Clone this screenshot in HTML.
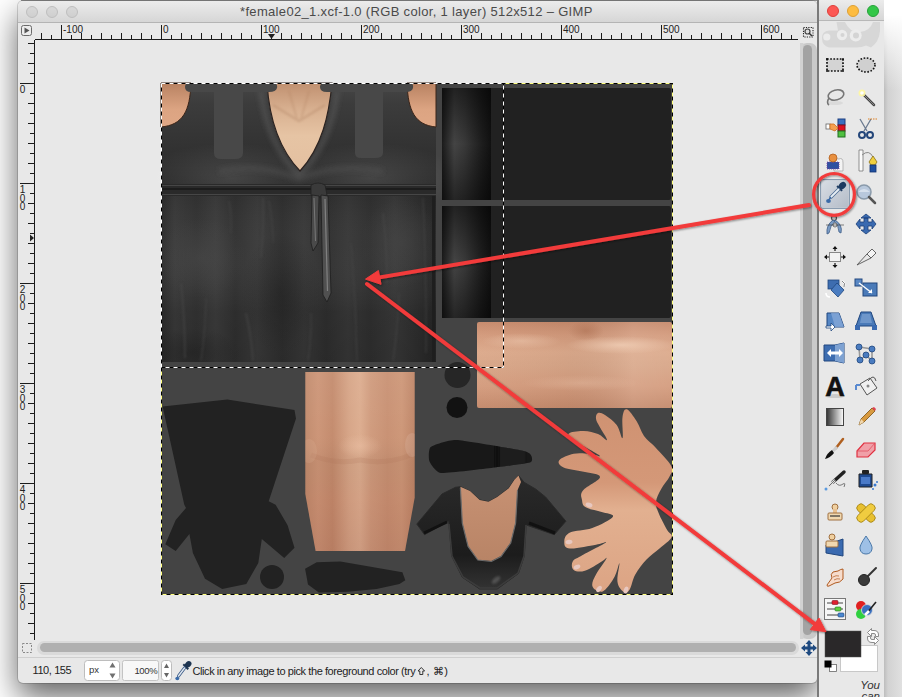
<!DOCTYPE html><html><head><meta charset="utf-8"><style>
*{margin:0;padding:0;box-sizing:border-box}
html,body{width:902px;height:697px;overflow:hidden;background:#fff;font-family:"Liberation Sans",sans-serif}
svg{position:absolute;left:0;top:0;overflow:visible}
#topline{position:absolute;left:21px;top:0;width:800px;height:1px;background:#9a9a9a}
#win{position:absolute;left:18px;top:1px;width:799px;height:682px;border-radius:5px;background:#e8e8e8;
 box-shadow:0 0 0 1px rgba(0,0,0,0.15),0 14px 32px rgba(0,0,0,0.62);overflow:hidden}
#title{position:absolute;left:0;top:0;width:800px;height:22px;background:linear-gradient(#ececec,#d6d6d6);border-bottom:1px solid #b4b4b4}
.tl{position:absolute;top:5px;width:12px;height:12px;border-radius:50%}
#ttext{position:absolute;left:222px;top:3px;font-size:13px;letter-spacing:0.33px;color:#4a4a4a;white-space:nowrap}
#tool{position:absolute;left:817px;top:0;width:67px;height:697px;background:#e8e8e8;border-left:2px solid #7a7a7a;
 }
#rsh{position:absolute;left:884px;top:0;width:18px;height:697px;background:linear-gradient(to right,#bdbdbd,#d2d2d2 4px,#e0e0e0)}
#rsh2{position:absolute;left:883px;top:0;width:19px;height:90px;background:linear-gradient(#fff 15px,rgba(255,255,255,0))}
#ttitle{position:absolute;left:0;top:0;width:65px;height:21px;background:linear-gradient(#ececec,#d6d6d6);border-bottom:1px solid #b8b8b8}
#status{position:absolute;left:15px;top:673px;font-size:11px;letter-spacing:-0.4px;color:#222;white-space:nowrap;line-height:12px}
</style></head><body><div id="topline"></div>
<div id="win">
<div id="title">
<div class="tl" style="left:8px;background:linear-gradient(#d8d8d8,#cfcfcf);border:1px solid #bdbdbd"></div>
<div class="tl" style="left:28px;background:linear-gradient(#d8d8d8,#cfcfcf);border:1px solid #bdbdbd"></div>
<div class="tl" style="left:48px;background:linear-gradient(#d8d8d8,#cfcfcf);border:1px solid #bdbdbd"></div>
<div id="ttext">*female02_1.xcf-1.0 (RGB color, 1 layer) 512x512 – GIMP</div>
</div>
</div>
<svg width="902" height="697" viewBox="0 0 902 697" style="font-family:Liberation Sans">
<g transform="translate(161 83)"><defs>
<linearGradient id="skirtH" x1="0" x2="1" y1="0" y2="0">
 <stop offset="0" stop-color="#2c2c2c"/><stop offset="0.05" stop-color="#3a3a3a"/><stop offset="0.13" stop-color="#333"/>
 <stop offset="0.2" stop-color="#3c3c3c"/><stop offset="0.27" stop-color="#313131"/><stop offset="0.35" stop-color="#3b3b3b"/>
 <stop offset="0.44" stop-color="#303030"/><stop offset="0.52" stop-color="#393939"/><stop offset="0.6" stop-color="#2f2f2f"/>
 <stop offset="0.68" stop-color="#383838"/><stop offset="0.76" stop-color="#303030"/><stop offset="0.85" stop-color="#393939"/>
 <stop offset="0.93" stop-color="#2f2f2f"/><stop offset="1" stop-color="#262626"/>
</linearGradient>
<linearGradient id="skirtV" x1="0" x2="0" y1="0" y2="1">
 <stop offset="0" stop-color="#000" stop-opacity="0.05"/><stop offset="0.3" stop-color="#fff" stop-opacity="0.02"/>
 <stop offset="0.7" stop-color="#000" stop-opacity="0.08"/><stop offset="1" stop-color="#000" stop-opacity="0.12"/>
</linearGradient>
<linearGradient id="bodice" x1="0" x2="0" y1="0" y2="1">
 <stop offset="0" stop-color="#464646"/><stop offset="0.2" stop-color="#3c3c3c"/><stop offset="0.6" stop-color="#333"/><stop offset="1" stop-color="#2a2a2a"/>
</linearGradient>
<radialGradient id="bodHi" cx="0.5" cy="0.5" r="0.5">
 <stop offset="0" stop-color="#fff" stop-opacity="0.12"/><stop offset="1" stop-color="#fff" stop-opacity="0"/>
</radialGradient>
<linearGradient id="neck" x1="0" x2="0" y1="0" y2="1">
 <stop offset="0" stop-color="#c09070"/><stop offset="0.3" stop-color="#d8b090"/><stop offset="0.6" stop-color="#e6c4a4"/><stop offset="1" stop-color="#e4c0a0"/>
</linearGradient>
<linearGradient id="shoulder" x1="0" x2="0" y1="0" y2="1">
 <stop offset="0" stop-color="#b88262"/><stop offset="0.6" stop-color="#dca482"/><stop offset="1" stop-color="#e0a886"/>
</linearGradient>
<filter id="blur2" x="-20%" y="-20%" width="140%" height="140%"><feGaussianBlur stdDeviation="2.5"/></filter>
<filter id="blur1" x="-20%" y="-20%" width="140%" height="140%"><feGaussianBlur stdDeviation="1"/></filter>
<linearGradient id="armV" x1="0" x2="0" y1="0" y2="1">
 <stop offset="0" stop-color="#c68a6c"/><stop offset="0.15" stop-color="#d39a7c"/><stop offset="0.35" stop-color="#dcaa8c"/><stop offset="0.5" stop-color="#d8a688"/>
 <stop offset="0.75" stop-color="#d49c7e"/><stop offset="1" stop-color="#c48a6c"/>
</linearGradient>
<linearGradient id="armH" x1="0" x2="1" y1="0" y2="0">
 <stop offset="0" stop-color="#fff" stop-opacity="0.02"/><stop offset="0.45" stop-color="#000" stop-opacity="0.03"/>
 <stop offset="0.8" stop-color="#fff" stop-opacity="0.1"/><stop offset="1" stop-color="#fff" stop-opacity="0.05"/>
</linearGradient>
<radialGradient id="hiw" cx="0.5" cy="0.5" r="0.5"><stop offset="0" stop-color="#f4d4bc" stop-opacity="0.7"/><stop offset="1" stop-color="#f4d4bc" stop-opacity="0"/></radialGradient>
<radialGradient id="dkp" cx="0.5" cy="0.5" r="0.5"><stop offset="0" stop-color="#a86a4c" stop-opacity="0.5"/><stop offset="1" stop-color="#a86a4c" stop-opacity="0"/></radialGradient>
<linearGradient id="legH" x1="0" x2="1" y1="0" y2="0">
 <stop offset="0" stop-color="#c08a6c"/><stop offset="0.12" stop-color="#cc9476"/><stop offset="0.25" stop-color="#c38a6c"/>
 <stop offset="0.4" stop-color="#d6a486"/><stop offset="0.5" stop-color="#dcac8e"/><stop offset="0.6" stop-color="#cf9a7c"/>
 <stop offset="0.75" stop-color="#c89072"/><stop offset="0.88" stop-color="#cd9677"/><stop offset="1" stop-color="#bd8466"/>
</linearGradient>
<linearGradient id="legV" x1="0" x2="0" y1="0" y2="1">
 <stop offset="0" stop-color="#fff" stop-opacity="0.06"/><stop offset="0.35" stop-color="#fff" stop-opacity="0.02"/>
 <stop offset="0.5" stop-color="#000" stop-opacity="0.04"/><stop offset="0.7" stop-color="#500" stop-opacity="0.06"/><stop offset="1" stop-color="#400" stop-opacity="0.1"/>
</linearGradient>
<radialGradient id="knee" cx="0.5" cy="0.5" r="0.5">
 <stop offset="0" stop-color="#ecc0a4" stop-opacity="0.55"/><stop offset="1" stop-color="#ecc0a4" stop-opacity="0"/>
</radialGradient>
<linearGradient id="pfab" x1="0" x2="1" y1="0" y2="0">
 <stop offset="0" stop-color="#1a1a1a"/><stop offset="0.25" stop-color="#444"/><stop offset="0.45" stop-color="#3a3a3a"/>
 <stop offset="0.8" stop-color="#1e1e1e"/><stop offset="1" stop-color="#111"/>
</linearGradient>
<linearGradient id="pfabV" x1="0" x2="0" y1="0" y2="1">
 <stop offset="0" stop-color="#000" stop-opacity="0.5"/><stop offset="0.5" stop-color="#000" stop-opacity="0"/><stop offset="1" stop-color="#000" stop-opacity="0.45"/>
</linearGradient>
<linearGradient id="hand" x1="0" x2="1" y1="0" y2="0">
 <stop offset="0" stop-color="#d09474"/><stop offset="1" stop-color="#e0aa88"/>
</linearGradient>
<linearGradient id="hand2" x1="0" x2="1" y1="0" y2="0">
 <stop offset="0" stop-color="#d99e7e"/><stop offset="1" stop-color="#e8b898"/>
</linearGradient>
<linearGradient id="leather" x1="0" x2="0" y1="0" y2="1">
 <stop offset="0" stop-color="#2a2a2a"/><stop offset="0.7" stop-color="#1c1c1c"/><stop offset="1" stop-color="#333"/>
</linearGradient>
<linearGradient id="chest" x1="0" x2="0" y1="0" y2="1">
 <stop offset="0" stop-color="#c89274"/><stop offset="1" stop-color="#b88466"/>
</linearGradient>
<linearGradient id="handV" x1="0" x2="0" y1="0" y2="1">
 <stop offset="0" stop-color="#cf9272"/><stop offset="0.4" stop-color="#d49878"/><stop offset="0.55" stop-color="#e2b090"/><stop offset="1" stop-color="#dca484"/>
</linearGradient>
<radialGradient id="rgLight" cx="0.5" cy="0.5" r="0.5"><stop offset="0" stop-color="#4a4a4a" stop-opacity="0.55"/><stop offset="1" stop-color="#4a4a4a" stop-opacity="0"/></radialGradient>
<radialGradient id="rgDark" cx="0.5" cy="0.5" r="0.5"><stop offset="0" stop-color="#1c1c1c" stop-opacity="0.45"/><stop offset="1" stop-color="#1c1c1c" stop-opacity="0"/></radialGradient>
</defs>
<rect x="0" y="0" width="512" height="512" fill="#444"/>
<rect x="0" y="0" width="275" height="279" fill="#2e2e2e"/>
<rect x="0" y="0" width="275" height="101" fill="url(#bodice)"/>
<ellipse cx="70" cy="95" rx="90" ry="35" fill="url(#bodHi)"/>
<ellipse cx="210" cy="95" rx="90" ry="35" fill="url(#bodHi)"/>
<rect x="0" y="113" width="275" height="166" fill="url(#skirtH)"/>
<rect x="0" y="113" width="275" height="166" fill="url(#skirtV)"/>
<clipPath id="skclip"><rect x="0" y="113" width="275" height="166"/></clipPath>
<g clip-path="url(#skclip)">
<ellipse cx="40" cy="175" rx="45" ry="40" fill="url(#rgLight)"/><ellipse cx="240" cy="160" rx="40" ry="45" fill="url(#rgLight)" opacity="0.8"/><ellipse cx="120" cy="210" rx="40" ry="60" fill="url(#rgDark)"/><ellipse cx="30" cy="270" rx="50" ry="25" fill="url(#rgDark)"/>
<g filter="url(#blur1)" stroke="#484848" fill="none" opacity="0.5">
<path d="M102 115Q103.0 145.0 100 175" stroke-width="2"/>
<path d="M108 118Q112.0 139.0 112 160" stroke-width="1.5"/>
<path d="M20 200Q24.0 237.5 24 275" stroke-width="2"/>
<path d="M45 215Q44.5 246.5 40 278" stroke-width="1.5"/>
<path d="M85 230Q90.5 254.0 92 278" stroke-width="2"/>
<path d="M190 160Q195.0 219.0 196 278" stroke-width="1.5"/>
<path d="M222 130Q226.0 165.0 226 200" stroke-width="2"/>
<path d="M238 210Q237.0 244.0 232 278" stroke-width="1.5"/>
<path d="M262 115Q265.5 192.5 265 270" stroke-width="1.5"/>
<path d="M68 118Q71.0 134.0 70 150" stroke-width="1.5"/>
<path d="M150 230Q150.5 254.0 147 278" stroke-width="1.5"/>
</g></g>
<rect x="0" y="101" width="275" height="12" fill="#2a2a2a"/>
<path d="M0 102.5H275M0 111.5H275" stroke="#464646" stroke-width="1"/>
<path d="M0 106H275" stroke="#1c1c1c" stroke-width="2"/>
<rect x="271" y="113" width="3" height="166" fill="#1e1e1e"/>
<g filter="url(#blur2)" fill="none" stroke-linecap="round">
<path d="M100 10C104 40 115 70 138 92C161 70 172 40 176 10" stroke="#5a5a5a" stroke-width="5" opacity="0.6"/>
<path d="M60 88Q100 80 138 96Q176 80 220 88" stroke="#505050" stroke-width="5" opacity="0.6"/>
<path d="M8 20H20M255 20H268" stroke="#4a4a4a" stroke-width="8" opacity="0.5"/>
</g>
<path d="M0 0H30C29 28 22 42 0 44Z" fill="url(#shoulder)" stroke="#3a2418" stroke-width="1"/>
<path d="M275 0H246C247 28 254 42 275 44Z" fill="url(#shoulder)" stroke="#3a2418" stroke-width="1"/>
<path d="M106 0C108 32 116 64 139 88C161 64 168 32 171 0Z" fill="url(#neck)" stroke="#2a2220" stroke-width="1.2"/>
<g filter="url(#blur1)" opacity="0.3"><path d="M112 22Q125 30 138 38Q151 30 164 22" stroke="#a87a5c" stroke-width="2.5" fill="none"/><path d="M128 8L136 36M148 8L140 36" stroke="#b08262" stroke-width="2" fill="none"/></g>
<path d="M28 0H112Q117 0 116 5Q115 9 108 9H82V70Q82 76 74 76H60Q53 76 53 70V9H30Q24 9 24 4Q24 0 28 0Z" fill="#484848"/>
<path d="M163 0H248Q253 0 252 5Q251 9 245 9H222V70Q222 75 214 75H200Q194 75 194 70V9H166Q159 9 159 4Q159 0 163 0Z" fill="#484848"/>
<path d="M150 102Q157 98 164 102L166 112Q158 116 150 112Z" fill="#3a3a3a" stroke="#222" stroke-width="0.8"/>
<path d="M151 112L158 113L157 160L152 168L150 160Z" fill="#4a4a4a" stroke="#1e1e1e" stroke-width="0.8"/><path d="M153 115L154.5 158" stroke="#777" stroke-width="1"/>
<path d="M160 112L167 113L170 210L166 219L162 212Z" fill="#505050" stroke="#1e1e1e" stroke-width="0.8"/><path d="M164 116L166.5 208" stroke="#808080" stroke-width="1.2"/>
<rect x="281" y="5" width="229" height="112" rx="2" fill="#212121"/>
<rect x="281" y="5" width="49" height="112" fill="url(#pfab)"/>
<rect x="281" y="5" width="49" height="112" fill="url(#pfabV)"/>
<rect x="281" y="123" width="229" height="112" rx="2" fill="#212121"/>
<rect x="281" y="123" width="49" height="112" fill="url(#pfab)"/>
<rect x="281" y="123" width="49" height="112" fill="url(#pfabV)"/>
<rect x="316" y="239" width="195" height="86" rx="2" fill="url(#armV)"/>
<rect x="316" y="239" width="195" height="86" rx="2" fill="url(#armH)"/><clipPath id="armclip"><rect x="316" y="239" width="195" height="86" rx="2"/></clipPath><g clip-path="url(#armclip)"><ellipse cx="460" cy="262" rx="55" ry="9" fill="url(#hiw)"/><ellipse cx="360" cy="258" rx="40" ry="8" fill="url(#hiw)" opacity="0.6"/><ellipse cx="425" cy="248" rx="18" ry="10" fill="url(#dkp)"/><ellipse cx="420" cy="300" rx="60" ry="8" fill="url(#hiw)" opacity="0.35"/></g>
<circle cx="296.5" cy="292" r="13" fill="#262626"/>
<circle cx="296" cy="324.5" r="10.5" fill="#121212"/>
<clipPath id="legclip"><path d="M144.3 289H253.7V414.5L244 468H154.6L144.3 411Z"/></clipPath>
<g clip-path="url(#legclip)">
<rect x="144" y="289" width="110" height="180" fill="url(#legH)"/>
<rect x="144" y="289" width="110" height="180" fill="url(#legV)"/>
<ellipse cx="199" cy="363" rx="22" ry="12" fill="url(#knee)"/><path d="M150 372Q175 382 199 377Q225 382 250 372" stroke="#a86c50" stroke-width="5" fill="none" opacity="0.15"/><ellipse cx="148" cy="368" rx="8" ry="12" fill="#e8c0a8" opacity="0.15"/><ellipse cx="251" cy="362" rx="7" ry="12" fill="#e8c8b8" opacity="0.2"/>
</g>
<polygon points="1.6,323.5 66.3,316.6 133.5,327.0 135.0,335.6 107.7,418.2 114.6,421.7 126.6,442.3 133.5,464.7 123.2,475.0 100.8,456.0 97.3,480.0 85.3,501.0 61.2,506.0 44.0,495.7 31.9,470.0 28.4,451.0 14.7,468.0 4.3,461.3 14.7,437.0 25.0,425.0 23.3,421.7" fill="#222"/>
<circle cx="111" cy="494" r="12" fill="#222"/>
<polygon points="144.1,485.7 155.7,479.2 179.4,478.5 216.9,485.0 241.4,489.3 244.3,497.3 238.5,500.9 215.5,505.9 186.6,508.8 157.8,509.5 147.0,501.6" fill="#222"/>
<path d="M269.7 364.0C272.0 362.2 287.8 356.7 295.5 357.0C303.2 357.3 356.5 366.7 362.7 368.0C368.9 369.3 369.9 372.0 370.4 373.0C370.9 374.0 372.2 378.6 369.0 379.6C365.8 380.6 339.1 383.9 331.7 384.8C324.3 385.7 285.3 390.5 280.0 390.0C274.7 389.5 269.3 380.5 268.4 378.3C267.5 376.1 267.4 365.8 269.7 364.0Z" fill="#181818"/>
<clipPath id="sh3clip"><path d="M269.7 364.0C272.0 362.2 287.8 356.7 295.5 357.0C303.2 357.3 356.5 366.7 362.7 368.0C368.9 369.3 369.9 372.0 370.4 373.0C370.9 374.0 372.2 378.6 369.0 379.6C365.8 380.6 339.1 383.9 331.7 384.8C324.3 385.7 285.3 390.5 280.0 390.0C274.7 389.5 269.3 380.5 268.4 378.3C267.5 376.1 267.4 365.8 269.7 364.0Z"/></clipPath>
<g clip-path="url(#sh3clip)"><rect x="334" y="357" width="4" height="40" fill="#0c0c0c" filter="url(#blur1)"/><rect x="339" y="357" width="25" height="40" fill="#202020" opacity="0.6" filter="url(#blur1)"/></g>
<polygon points="281.0,411.0 294.5,404.3 299.4,403.7 309.0,408.1 318.7,416.9 327.5,418.8 336.2,414.0 347.8,405.2 353.6,396.5 357.5,392.6 363.3,399.4 374.9,406.2 384.6,414.0 404.9,438.2 393.3,451.7 365.2,442.0 363.3,473.0 357.5,490.5 336.2,506.0 318.7,506.0 301.3,494.3 290.6,473.0 287.7,438.2 263.5,451.7 255.8,441.1" fill="url(#leather)" stroke="#2a2a2a" stroke-width="1" stroke-linejoin="round"/>
<polygon points="299.4,403.7 309.0,408.1 318.7,416.9 327.5,418.8 336.2,414.0 347.8,405.2 353.6,396.5 357.5,392.6 360.0,399.0 356.5,407.2 354.6,440.1 349.7,459.5 340.0,473.0 330.4,477.9 316.8,476.9 307.1,463.4 301.3,440.1" fill="url(#chest)"/>
<polyline points="299.4,405.0 301.3,440.1 307.1,463.4 316.8,477.0 330.4,478.5 340.0,473.5 349.7,460.0 354.6,440.1 356.5,407.2" stroke="#6a6a6a" stroke-width="1.2" fill="none"/>
<polyline points="288.0,441.0 291.0,473.0 302.0,494.0 319.0,505.0 336.0,505.0 357.0,490.0 363.0,473.0 365.0,442.0" stroke="#3c3c3c" stroke-width="1.5" fill="none"/>
<ellipse cx="335" cy="497" rx="5" ry="2.5" fill="#6a6a6a" opacity="0.6" filter="url(#blur1)" transform="rotate(-40 335 497)"/>
<polyline points="263.0,450.0 286.0,439.0" stroke="#111" stroke-width="3" fill="none"/>
<polyline points="394.0,450.0 368.0,440.0" stroke="#111" stroke-width="3" fill="none"/>
<path d="M465.8 326.3C468.4 327.1 472.6 333.6 475.8 338.5C479.0 343.4 479.6 348.2 483.0 352.9C486.4 357.6 489.5 358.9 494.5 364.4C499.5 369.9 507.7 377.8 510.3 383.0C512.9 388.2 510.7 388.8 508.8 393.0C506.9 397.2 502.7 401.3 500.2 406.0C497.7 410.7 495.5 414.3 495.0 418.7C494.5 423.1 495.6 424.9 497.6 430.0C499.6 435.1 503.6 442.3 506.0 446.7C508.4 451.1 512.0 450.8 510.6 454.2C509.2 457.6 503.1 461.3 498.5 465.4C493.9 469.5 489.9 471.8 485.5 476.6C481.1 481.4 477.4 486.0 474.3 491.5C471.2 497.0 470.8 503.2 468.7 506.4C466.6 509.6 465.2 510.6 463.0 509.2C460.8 507.8 457.3 504.3 456.5 499.0C455.7 493.7 458.9 481.3 458.4 480.3C457.9 479.3 456.3 488.6 453.7 493.4C451.1 498.2 447.3 503.7 444.4 506.4C441.5 509.1 440.3 509.0 437.9 508.3C435.5 507.6 431.8 505.8 431.3 502.7C430.8 499.6 432.4 496.4 435.0 491.5C437.6 486.6 444.3 478.1 445.3 475.7C446.3 473.3 444.6 476.3 440.7 478.5C436.8 480.7 429.0 486.3 423.9 487.8C418.8 489.3 414.9 488.6 412.7 486.9C410.5 485.2 410.3 481.1 411.7 478.5C413.1 475.9 414.1 476.3 420.1 472.9C426.1 469.5 441.7 461.9 444.4 459.8C447.1 457.7 441.5 460.7 435.0 461.7C428.5 462.7 414.8 465.9 409.0 465.4C403.2 464.9 403.3 461.8 403.3 458.9C403.3 456.0 403.9 452.1 409.0 449.5C414.1 446.9 423.4 447.8 431.3 444.9C439.2 442.0 450.2 436.6 451.9 433.7C453.6 430.8 445.7 430.7 440.7 429.0C435.7 427.3 428.4 426.5 424.8 424.3C421.2 422.1 421.5 420.0 421.0 416.9C420.5 413.8 418.7 411.7 422.0 407.5C425.3 403.3 438.9 397.4 439.0 394.0C439.1 390.6 429.4 390.5 422.7 388.8C416.0 387.1 407.1 386.6 402.6 384.5C398.1 382.4 396.4 379.8 398.3 377.3C400.2 374.8 407.1 372.0 412.7 370.8C418.3 369.6 424.2 370.6 429.0 371.0C433.8 371.4 439.4 374.0 439.0 373.0C438.6 372.0 431.6 368.4 427.0 365.8C422.4 363.2 417.6 361.4 414.0 358.6C410.4 355.8 406.0 352.7 407.6 350.7C409.2 348.7 417.3 347.8 422.7 347.9C428.1 348.0 432.7 349.3 437.0 351.0C441.3 352.7 445.7 358.4 446.0 357.0C446.3 355.6 440.5 347.5 438.5 343.6C436.5 339.7 435.3 338.2 435.0 335.7C434.7 333.2 435.4 330.7 437.0 330.0C438.6 329.3 440.6 329.8 444.0 332.0C447.4 334.2 452.5 337.8 455.7 342.0C458.9 346.2 460.4 356.4 461.5 355.0C462.6 353.6 460.7 339.5 461.5 334.2C462.3 328.9 463.2 325.5 465.8 326.3Z" fill="url(#handV)"/>
<ellipse cx="428" cy="422" rx="3.5" ry="2.2" fill="#e8c8c0" transform="rotate(15 428 422)"/>
<ellipse cx="408" cy="459" rx="3.5" ry="2.2" fill="#e8c8c0" transform="rotate(-10 408 459)"/>
<ellipse cx="416" cy="484" rx="3.5" ry="2.2" fill="#e8c8c0" transform="rotate(-25 416 484)"/>
<ellipse cx="438" cy="506" rx="3.5" ry="2.2" fill="#e8c8c0" transform="rotate(-50 438 506)"/>
<ellipse cx="465" cy="507" rx="3.5" ry="2.2" fill="#e8c8c0" transform="rotate(-70 465 507)"/></g>
<rect x="161.5" y="83.5" width="511" height="511" fill="none" stroke="#000" stroke-width="1"/>
<rect x="161.5" y="83.5" width="511" height="511" fill="none" stroke="#ffff80" stroke-width="1" stroke-dasharray="4 4"/>
<rect x="161.5" y="83.5" width="342" height="284" fill="none" stroke="#000" stroke-width="1"/>
<rect x="161.5" y="83.5" width="342" height="284" fill="none" stroke="#fff" stroke-width="1" stroke-dasharray="4 4"/>
<path d="M41.5 33V39 M51.5 35V39 M61.5 25V39 M71.5 35V39 M81.5 33V39 M91.5 35V39 M101.5 33V39 M111.5 35V39 M121.5 33V39 M131.5 35V39 M141.5 33V39 M151.5 35V39 M161.5 25V39 M171.5 35V39 M181.5 33V39 M191.5 35V39 M201.5 33V39 M211.5 35V39 M221.5 33V39 M231.5 35V39 M241.5 33V39 M251.5 35V39 M261.5 25V39 M271.5 35V39 M281.5 33V39 M291.5 35V39 M301.5 33V39 M311.5 35V39 M321.5 33V39 M331.5 35V39 M341.5 33V39 M351.5 35V39 M361.5 25V39 M371.5 35V39 M381.5 33V39 M391.5 35V39 M401.5 33V39 M411.5 35V39 M421.5 33V39 M431.5 35V39 M441.5 33V39 M451.5 35V39 M461.5 25V39 M471.5 35V39 M481.5 33V39 M491.5 35V39 M501.5 33V39 M511.5 35V39 M521.5 33V39 M531.5 35V39 M541.5 33V39 M551.5 35V39 M561.5 25V39 M571.5 35V39 M581.5 33V39 M591.5 35V39 M601.5 33V39 M611.5 35V39 M621.5 33V39 M631.5 35V39 M641.5 33V39 M651.5 35V39 M661.5 25V39 M671.5 35V39 M681.5 33V39 M691.5 35V39 M701.5 33V39 M711.5 35V39 M721.5 33V39 M731.5 35V39 M741.5 33V39 M751.5 35V39 M761.5 25V39 M771.5 35V39 M781.5 33V39 M791.5 35V39" stroke="#1a1a1a" stroke-width="1"/>
<path d="M35 39.5H798" stroke="#1a1a1a" stroke-width="1"/>
<text x="63" y="32.5" font-size="10" fill="#222">-100</text>
<text x="163" y="32.5" font-size="10" fill="#222">0</text>
<text x="263" y="32.5" font-size="10" fill="#222">100</text>
<text x="363" y="32.5" font-size="10" fill="#222">200</text>
<text x="463" y="32.5" font-size="10" fill="#222">300</text>
<text x="563" y="32.5" font-size="10" fill="#222">400</text>
<text x="663" y="32.5" font-size="10" fill="#222">500</text>
<text x="763" y="32.5" font-size="10" fill="#222">600</text>
<path d="M28 43.5H34 M30 53.5H34 M28 63.5H34 M30 73.5H34 M20 83.5H34 M30 93.5H34 M28 103.5H34 M30 113.5H34 M28 123.5H34 M30 133.5H34 M28 143.5H34 M30 153.5H34 M28 163.5H34 M30 173.5H34 M20 183.5H34 M30 193.5H34 M28 203.5H34 M30 213.5H34 M28 223.5H34 M30 233.5H34 M28 243.5H34 M30 253.5H34 M28 263.5H34 M30 273.5H34 M20 283.5H34 M30 293.5H34 M28 303.5H34 M30 313.5H34 M28 323.5H34 M30 333.5H34 M28 343.5H34 M30 353.5H34 M28 363.5H34 M30 373.5H34 M20 383.5H34 M30 393.5H34 M28 403.5H34 M30 413.5H34 M28 423.5H34 M30 433.5H34 M28 443.5H34 M30 453.5H34 M28 463.5H34 M30 473.5H34 M20 483.5H34 M30 493.5H34 M28 503.5H34 M30 513.5H34 M28 523.5H34 M30 533.5H34 M28 543.5H34 M30 553.5H34 M28 563.5H34 M30 573.5H34 M20 583.5H34 M30 593.5H34 M28 603.5H34 M30 613.5H34 M28 623.5H34 M30 633.5H34" stroke="#1a1a1a" stroke-width="1"/>
<path d="M34.5 40V640" stroke="#1a1a1a" stroke-width="1"/>
<text x="19.8" y="92.6" font-size="10" fill="#222">0</text>
<text x="19.8" y="192.6" font-size="10" fill="#222">1</text>
<text x="19.8" y="201.5" font-size="10" fill="#222">0</text>
<text x="19.8" y="210.4" font-size="10" fill="#222">0</text>
<text x="19.8" y="292.6" font-size="10" fill="#222">2</text>
<text x="19.8" y="301.5" font-size="10" fill="#222">0</text>
<text x="19.8" y="310.40000000000003" font-size="10" fill="#222">0</text>
<text x="19.8" y="392.6" font-size="10" fill="#222">3</text>
<text x="19.8" y="401.5" font-size="10" fill="#222">0</text>
<text x="19.8" y="410.40000000000003" font-size="10" fill="#222">0</text>
<text x="19.8" y="492.6" font-size="10" fill="#222">4</text>
<text x="19.8" y="501.5" font-size="10" fill="#222">0</text>
<text x="19.8" y="510.40000000000003" font-size="10" fill="#222">0</text>
<text x="19.8" y="592.6" font-size="10" fill="#222">5</text>
<text x="19.8" y="601.5" font-size="10" fill="#222">0</text>
<text x="19.8" y="610.4" font-size="10" fill="#222">0</text>
<path d="M268 34H275L271.5 39Z" fill="#222"/>
<path d="M30 234.5V241.5L34 238Z" fill="#222"/>
<rect x="21.5" y="25.5" width="10" height="10" rx="2" fill="#ececec" stroke="#6a6a6a"/>
<path d="M24.5 27.5V33.5L29.5 30.5Z" fill="#555"/>
<rect x="803.5" y="27.5" width="9.5" height="9.5" fill="none" stroke="#222" stroke-width="1.1" stroke-dasharray="1.2 1.2"/>
<circle cx="807.5" cy="31.5" r="2.5" fill="#ddd" stroke="#444" stroke-width="1.2"/><path d="M809 33L812 36" stroke="#333" stroke-width="1.5"/>
<rect x="800" y="43" width="17" height="596" rx="7" fill="#c9c9c9"/><rect x="800" y="43" width="3.5" height="596" fill="#d2d2d2"/>
<rect x="803" y="45" width="9" height="590" rx="4.5" fill="#a3a3a3"/>
<rect x="37" y="641" width="762" height="14" rx="7" fill="#dadada"/>
<rect x="40" y="643" width="756" height="9" rx="4.5" fill="#b0b0b0"/>
<rect x="22.5" y="643.5" width="9" height="9" fill="none" stroke="#888" stroke-dasharray="2 1.5"/>
<g fill="#1f4a80" transform="translate(809 648)"><path d="M-1.5 -5H1.5V5H-1.5Z M-5 -1.5H5V1.5H-5Z"/><path d="M0 -8L-3.5 -4H3.5Z M0 8L-3.5 4H3.5Z M-8 0L-4 -3.5V3.5Z M8 0L4 -3.5V3.5Z"/></g>
<path d="M18 657.5H817" stroke="#cfcfcf" stroke-width="1"/>
<rect x="84.5" y="660.5" width="35" height="20" rx="3" fill="#fff" stroke="#bdbdbd"/>
<text x="89" y="672.5" font-size="9.5" fill="#333">px</text>
<path d="M109.5 667.5L112.5 662.5L115.5 667.5Z M109.5 673.5L112.5 678.5L115.5 673.5Z" fill="#707070"/>
<rect x="122.5" y="660.5" width="36" height="20" rx="2" fill="#f8f8f8" stroke="#c4c4c4"/>
<text x="157.5" y="673.5" font-size="9.5" letter-spacing="-0.3" text-anchor="end" fill="#333">100%</text>
<rect x="161.5" y="660.5" width="10" height="20" rx="3" fill="#fff" stroke="#bdbdbd"/>
<path d="M164 668L166.5 663.5L169 668Z M164 673L166.5 677.5L169 673Z" fill="#666"/>
<g transform="rotate(45 186.5 666)"><ellipse cx="186.5" cy="663.5" rx="2.8" ry="3.5" fill="#1d3450"/><rect x="183" y="666" width="7" height="2" fill="#1d3450"/></g>
<path d="M184.5 668L178.5 676" stroke="#3a5a86" stroke-width="3" stroke-linecap="round"/><path d="M184.5 668L178.5 676" stroke="#e0e8f0" stroke-width="1.4" stroke-linecap="round"/>
<ellipse cx="177.3" cy="678.5" rx="2" ry="1.8" fill="#3a6aa8"/>
<text x="192.5" y="675" font-size="11" letter-spacing="-0.42" fill="#222">Click in any image to pick the foreground color (try</text>
<path d="M421.3 667.5L418 671H419.8V674.5H422.8V671H424.6Z" fill="none" stroke="#222" stroke-width="0.9" stroke-linejoin="miter"/>
<text x="426.5" y="675" font-size="11" letter-spacing="0.2" fill="#222">, ⌘)</text>
<text x="32.5" y="674" font-size="11" letter-spacing="-0.4" fill="#222">110, 155</text>
</svg>
<div id="rsh"></div><div id="rsh2"></div>
<div id="tool"><div id="ttitle">
<div class="tl" style="left:8px;top:5px;background:#fc5753;border:1px solid #de3f3a"></div>
<div class="tl" style="left:28px;top:5px;background:#fdbc40;border:1px solid #dea034"></div>
<div class="tl" style="left:48px;top:5px;background:#33c748;border:1px solid #27a13a"></div>
</div></div>
<svg width="902" height="697" viewBox="0 0 902 697"><defs><linearGradient id="selbtn" x1="0" x2="1" y1="0" y2="1"><stop offset="0" stop-color="#d8dde4"/><stop offset="1" stop-color="#b4bcc8"/></linearGradient><linearGradient id="blendg" x1="0" x2="1"><stop offset="0" stop-color="#333"/><stop offset="1" stop-color="#fff"/></linearGradient></defs><path d="M822 38Q822 31 829 30.5L838 30.5L836.5 22H880V31Q879 42 871 47.5L866 45.5Q862 47.5 856 47.5H829Q822 46 822 38Z" fill="#d7d7d7"/>
<path d="M845 22Q850 33 860 32Q870 31 873 22Z" fill="#e9e9e9"/>
<g fill="#ececec"><circle cx="826.8" cy="37" r="3.6"/><circle cx="842" cy="35" r="5.2"/><circle cx="855.7" cy="35.5" r="6"/></g>
<g fill="#d4d4d4"><circle cx="842.5" cy="35" r="2"/><circle cx="856" cy="35.5" r="3"/></g>
<rect x="827" y="59" width="16" height="12" fill="#d4d4d4"/>
<rect x="827" y="59" width="16" height="12" fill="none" stroke="#111" stroke-width="1.7" stroke-dasharray="1.7 1.5"/>
<g fill="#111"><rect x="826.15" y="58.15" width="1.7" height="1.7"/><rect x="842.15" y="58.15" width="1.7" height="1.7"/><rect x="826.15" y="70.15" width="1.7" height="1.7"/><rect x="842.15" y="70.15" width="1.7" height="1.7"/></g>
<ellipse cx="866" cy="65" rx="9" ry="7" fill="#d0d0d0" stroke="#111" stroke-width="1.6" stroke-dasharray="1.6 1.6"/>
<g fill="none" stroke="#777" stroke-width="1.6"><ellipse cx="836" cy="95" rx="8" ry="5" transform="rotate(-15 836 95)"/><path d="M829 98Q826 103 829 105"/></g>
<ellipse cx="835" cy="103" rx="8" ry="2" fill="#000" opacity="0.06"/>
<path d="M863 94L874 105" stroke="#444" stroke-width="2.5" stroke-linecap="round"/>
<path d="M863 94L874 105" stroke="#888" stroke-width="1" stroke-linecap="round"/>
<circle cx="862" cy="93" r="3.5" fill="#fff7a0" opacity="0.9"/><circle cx="862" cy="93" r="1.8" fill="#fff"/>
<rect x="838" y="119" width="7" height="6" fill="#3a70c0" stroke="#1c3f80" stroke-width="1"/>
<rect x="838" y="125" width="7" height="6" fill="#dd1020" stroke="#801020" stroke-width="1"/>
<rect x="838" y="131" width="7" height="6" fill="#50c040" stroke="#207020" stroke-width="1"/>
<rect x="826" y="124" width="4" height="5" fill="#fff" stroke="#666" stroke-width="0.8"/>
<path d="M830 124H834L838 128L835 131L830 129Z" fill="#f6a050" stroke="#d07020" stroke-width="0.8"/>
<g fill="none" stroke="#6a7a90" stroke-width="1.3"><path d="M860 119L867 131M871 119L864 131"/></g>
<path d="M868 119H877" stroke="#e08020" stroke-width="1" stroke-dasharray="1.5 1"/>
<g fill="none" stroke="#24467a" stroke-width="2"><circle cx="862" cy="135" r="3"/><circle cx="870" cy="135" r="3"/></g>
<path d="M834 171V163Q835 158 839 159Q843 157 843 163V171Z" fill="#f4f4f4" stroke="#aaa" stroke-width="0.8"/>
<rect x="827" y="162" width="12" height="7" fill="#3050a0" stroke="#8040a0" stroke-width="0.8" stroke-dasharray="1 1"/>
<circle cx="833" cy="158" r="4" fill="#e89040" stroke="#b06020" stroke-width="0.8"/>
<path d="M859 150H863V171H859Z" fill="#fafafa" stroke="#777" stroke-width="0.8"/>
<path d="M862 155Q869 149 873 157" stroke="#888" stroke-width="1" fill="none"/>
<path d="M873 156L877 162L875 165H871L869 162Z" fill="#f0d040" stroke="#8a7010" stroke-width="0.8"/>
<rect x="870" y="165" width="6" height="7" fill="#2050a0" stroke="#103070" stroke-width="0.8"/>
<rect x="820.5" y="179.5" width="29" height="29" rx="2" fill="#c6ccd4" stroke="#8a9cb0" stroke-width="1"/>
<rect x="821.5" y="180.5" width="27" height="27" rx="1.5" fill="url(#selbtn)"/>
<g transform="rotate(45 841 187)"><ellipse cx="841" cy="185" rx="3.2" ry="4" fill="#1d3a60"/><rect x="837.5" y="188" width="7" height="2" fill="#1d3a60"/></g>
<path d="M838.5 189.5L831 197" stroke="#4a6a90" stroke-width="3.4" stroke-linecap="round"/>
<path d="M838.5 189.5L831 197" stroke="#e8eef4" stroke-width="1.8" stroke-linecap="round"/>
<path d="M831 197Q829 199 829 200" stroke="#3a6aa8" stroke-width="1.4" fill="none"/>
<ellipse cx="828.5" cy="201" rx="2.4" ry="2" fill="#3a6aa8"/>
<circle cx="864" cy="192" r="7" fill="#b8c8dc" stroke="#8a9aaa" stroke-width="1.5"/>
<path d="M858 192Q864 186 870 192" fill="#dde6f0" opacity="0.8"/>
<path d="M869 197L875 203" stroke="#555" stroke-width="2.5" stroke-linecap="round"/>
<circle cx="834" cy="218" r="2.5" fill="#ccc" stroke="#555" stroke-width="1.2"/>
<path d="M833 220Q826 225 827 234L829 233Q830 226 835 221Z" fill="#7a9cc6" stroke="#3c5c86" stroke-width="0.8"/>
<path d="M835 220Q843 225 841 233L839 232Q839 226 834 221Z" fill="#7a9cc6" stroke="#3c5c86" stroke-width="0.8"/>
<circle cx="835" cy="225" r="2" fill="#eee" stroke="#555" stroke-width="0.8"/><path d="M826 225H844" stroke="#333" stroke-width="0.6"/>
<g fill="#3a6ab0" stroke="#1c4078" stroke-width="0.8" transform="translate(866 224)"><path d="M-2 -6H2V-2H6V-5L10 0L6 5V2H2V6H5L0 10L-5 6H-2V2H-6V5L-10 0L-6 -5V-2H-2V-6H-5L0 -10L5 -6H2Z"/></g>
<rect x="829.5" y="252.5" width="11" height="9" fill="#f2f2f2" stroke="#888" stroke-width="1"/>
<g fill="#111"><path d="M835 246L832.5 249H837.5Z M835 268L832.5 265H837.5Z M824 257L827 254.5V259.5Z M846 257L843 254.5V259.5Z"/></g>
<g stroke="#111" stroke-width="1.2"><path d="M835 249V251M835 265V263M827 257H829M843 257H841"/></g>
<path d="M857 265L867 254L871 258Z" fill="#e8e8e8" stroke="#555" stroke-width="0.9"/>
<path d="M867 254L872 249L876 253L871 258Z" fill="#f4f4f4" stroke="#555" stroke-width="0.9"/>
<rect x="828" y="280" width="11" height="9" fill="#3d6db0" stroke="#20467e" stroke-width="0.8"/>
<path d="M831 290L837 283L844 290L838 297Z" fill="#4a7cc0" stroke="#20467e" stroke-width="0.8"/>
<path d="M842 281Q846 283 844 287" stroke="#fff" stroke-width="1.6" fill="none"/><path d="M826 293Q826 297 830 297" stroke="#fff" stroke-width="1.6" fill="none"/>
<path d="M842 281Q846 283 844 287" stroke="#333" stroke-width="0.6" fill="none"/>
<rect x="863" y="283" width="14" height="13" fill="#4a7ab8" stroke="#20467e" stroke-width="1"/>
<rect x="855" y="279" width="7" height="7" fill="#5a88c4" stroke="#20467e" stroke-width="1"/>
<path d="M859 283L872 293" stroke="#fff" stroke-width="1.4"/><path d="M872 293L868 293L872 289Z" fill="#fff"/>
<path d="M827 313H839L844 327H827Z" fill="#5586c4" stroke="#20467e" stroke-width="1"/>
<path d="M831 313H839L844 327H835Z" fill="#84a8d8" opacity="0.8"/>
<path d="M826 326H831V323L835 327L831 331V328H826Z" fill="#fff" stroke="#20467e" stroke-width="0.8"/>
<path d="M861 312H871L876 326H856Z" fill="#4a7ab8" stroke="#20467e" stroke-width="1"/>
<path d="M862 314H870L872 323H860Z" fill="#7ea2d2" opacity="0.7"/>
<rect x="855" y="325" width="5" height="5" fill="#3a6ab0"/><rect x="872" y="325" width="5" height="5" fill="#3a6ab0"/>
<path d="M824 345H835L844 343V363L835 361H824Z" fill="#3d6db0" stroke="#20467e" stroke-width="1"/>
<path d="M835 345L844 343V363L835 361Z" fill="#7ea2d2"/>
<path d="M827 353L831 349V351.5H839V349L843 353L839 357V354.5H831V357Z" fill="#fff"/>
<g stroke="#999" stroke-width="1.6" fill="none"><path d="M859 347L872 349L872 361L866 355L860 360Z"/></g>
<circle cx="859" cy="347" r="3" fill="#4a7cc0" stroke="#20467e" stroke-width="0.8"/>
<circle cx="872" cy="349" r="3" fill="#4a7cc0" stroke="#20467e" stroke-width="0.8"/>
<circle cx="866" cy="355" r="3" fill="#4a7cc0" stroke="#20467e" stroke-width="0.8"/>
<circle cx="860" cy="360" r="3" fill="#4a7cc0" stroke="#20467e" stroke-width="0.8"/>
<circle cx="872" cy="361" r="3" fill="#4a7cc0" stroke="#20467e" stroke-width="0.8"/>
<ellipse cx="835" cy="396" rx="10" ry="2" fill="#000" opacity="0.12"/><text x="835" y="395.5" font-size="27" font-weight="bold" text-anchor="middle" fill="#111" stroke="#111" stroke-width="0.6" font-family="Liberation Sans">A</text>
<path d="M860 384L870 378L877 388L867 395Z" fill="#f0f0f0" stroke="#555" stroke-width="1"/>
<path d="M856 385V390M856 385H860" stroke="#5a8ad0" stroke-width="2" fill="none"/>
<path d="M868 381Q874 373 876 381" stroke="#555" stroke-width="1" fill="none"/><circle cx="868" cy="386" r="1.5" fill="#888"/>
<rect x="826.5" y="408.5" width="17" height="17" fill="url(#blendg)" stroke="#444" stroke-width="1"/>
<path d="M859 425L861 419L872 408L875 411L864 422Z" fill="#d89a40" stroke="#7a5010" stroke-width="0.8"/>
<path d="M872 408L875 411L876 409L874 407Z" fill="#e04050"/>
<path d="M859 425L861 419L864 422Z" fill="#f0d8b0"/>
<path d="M836 448L843 439" stroke="#b06020" stroke-width="2.5" stroke-linecap="round"/>
<path d="M833 451L837 447" stroke="#ccc" stroke-width="3"/>
<path d="M825 459Q827 453 832 450L834 453Q830 458 825 459Z" fill="#111"/>
<path d="M857 451L864 443H875V450L868 457H857Z" fill="#f0a0a8" stroke="#e03040" stroke-width="1.2"/>
<path d="M857 451H868L875 443" stroke="#e05060" stroke-width="0.8" fill="none"/>
<path d="M833 482L844 472" stroke="#222" stroke-width="3.5" stroke-linecap="round"/>
<path d="M829 486L835 480" stroke="#ddd" stroke-width="2.5"/><path d="M829 486L835 480" stroke="#555" stroke-width="0.8"/>
<path d="M836 483Q839 487 843 484Q846 482 844 487" stroke="#777" stroke-width="1" fill="none"/>
<circle cx="826" cy="489" r="1.5" fill="#5a9ae0"/>
<rect x="862" y="470" width="7" height="4" rx="1" fill="#222"/>
<path d="M859 474H872V487H859Z" fill="#1f4a90" stroke="#222" stroke-width="1"/>
<rect x="861" y="477" width="9" height="7" fill="#4a7ac8"/>
<g fill="#3a7ad0"><circle cx="875" cy="485" r="1.5"/><circle cx="877" cy="482" r="1"/><circle cx="873" cy="489" r="1"/></g>
<circle cx="835" cy="507" r="3" fill="#f0d0a0" stroke="#a07040" stroke-width="1"/>
<rect x="833" y="509" width="4" height="4" fill="#e8c090"/>
<rect x="828" y="513" width="14" height="7" rx="1" fill="#f0d8b0" stroke="#a07040" stroke-width="1"/>
<path d="M830 516H840" stroke="#333" stroke-width="1.2"/>
<g transform="rotate(45 866 513)"><rect x="855" y="509" width="22" height="8" rx="3.5" fill="#e8c030" stroke="#a08010" stroke-width="0.8"/></g>
<g transform="rotate(-45 866 513)"><rect x="855" y="509" width="22" height="8" rx="3.5" fill="#f0cc40" stroke="#a08010" stroke-width="0.8"/></g>
<path d="M826 545L843 539V556L826 553Z" fill="#3a6ab0" stroke="#20467e" stroke-width="1"/>
<circle cx="832" cy="537" r="3" fill="#f0d0a0" stroke="#a07040" stroke-width="1"/>
<rect x="826" y="541" width="12" height="6" rx="1" fill="#f0d8b0" stroke="#a07040" stroke-width="1"/>
<path d="M866 536Q859 546 860 549Q861 554 866 554Q871 554 872 549Q873 546 866 536Z" fill="#9ec0e6" stroke="#4a78a8" stroke-width="1"/>
<path d="M827 585L832 578Q830 574 833 572L838 571Q841 569 843 569L843 579Q840 583 835 583L829 586Q827 587 827 585Z" fill="#f6dccc" stroke="#b05a20" stroke-width="1" stroke-linejoin="round"/>
<path d="M833 577Q836 575 839 576M834 580Q837 578 840 579" stroke="#b05a20" stroke-width="0.7" fill="none"/>
<path d="M868 576L876 568" stroke="#333" stroke-width="2" stroke-linecap="round"/>
<circle cx="864" cy="580" r="5.5" fill="#3a3a3a" stroke="#222" stroke-width="1"/>
<rect x="824.5" y="598.5" width="21" height="21" fill="#f6f6f6" stroke="#777" stroke-width="1"/>
<g stroke="#444" stroke-width="1.2"><path d="M827 603H843M827 609H843M827 615H843"/></g>
<rect x="832" y="600.5" width="6" height="4" rx="1" fill="#e02030" stroke="#801020" stroke-width="0.6"/>
<rect x="835" y="607" width="6" height="4" rx="1" fill="#60d040" stroke="#207020" stroke-width="0.6"/>
<rect x="838" y="613" width="6" height="4" rx="1" fill="#4a88d0" stroke="#1c4078" stroke-width="0.6"/>
<circle cx="861" cy="606" r="5" fill="#e02020"/><circle cx="861" cy="614" r="5" fill="#30d040"/><circle cx="867" cy="610" r="5.5" fill="#3a70c0" stroke="#ddd" stroke-width="0.8"/>
<path d="M867 613L876 602" stroke="#222" stroke-width="1.6"/><path d="M865 615L869 611" stroke="#fff" stroke-width="2.5"/>
<rect x="840.5" y="645.5" width="37" height="26" fill="#fff" stroke="#c8c8c8" stroke-width="1"/>
<rect x="825" y="631" width="36" height="26" fill="#2a2829" stroke="#555" stroke-width="0.5"/>
<path d="M867.5 632.5L871.5 628.5V630.5H874Q878.5 630.5 878.5 635V636.5H875.5V635Q875.5 633.5 874 633.5H871.5V636.5Z" fill="#fff" stroke="#808080" stroke-width="0.9" stroke-linejoin="round"/>
<path d="M878.5 640.5L874.5 644.5V642.5H872Q867.5 642.5 867.5 638V636.5H870.5V638Q870.5 639.5 872 639.5H874.5V636.5Z" fill="#fff" stroke="#808080" stroke-width="0.9" stroke-linejoin="round"/>
<rect x="829.5" y="664.5" width="7" height="7" fill="#fff" stroke="#666" stroke-width="0.8"/><rect x="824.5" y="660.5" width="7" height="7" fill="#000"/>
<text x="880" y="689" font-size="11.5" font-style="italic" text-anchor="end" fill="#333" font-family="Liberation Sans">You</text>
<text x="880" y="700" font-size="11.5" font-style="italic" text-anchor="end" fill="#333" font-family="Liberation Sans">can</text><defs><filter id="ash" x="-10%" y="-10%" width="120%" height="120%"><feGaussianBlur in="SourceAlpha" stdDeviation="1.2"/><feOffset dx="0.5" dy="1" result="b"/><feComponentTransfer><feFuncA type="linear" slope="0.45"/></feComponentTransfer><feMerge><feMergeNode/><feMergeNode in="SourceGraphic"/></feMerge></filter></defs>
<g filter="url(#ash)" fill="#f23b3b" stroke="#f23b3b">
<path d="M809 205L379.7 277.4" stroke-width="4" stroke-linecap="round" fill="none"/>
<path d="M365.5 279.1L378.4 270.5L381 284.3Z" stroke-width="1" stroke-linejoin="round"/>
<path d="M367 284L814.6 623.8" stroke-width="4" stroke-linecap="round" fill="none"/>
<path d="M826 631.7L810.3 629.6L818.9 618Z" stroke-width="1" stroke-linejoin="round"/>
<ellipse cx="834" cy="194.4" rx="20.4" ry="20.9" fill="none" stroke-width="3.2"/>
</g></svg></body></html>
